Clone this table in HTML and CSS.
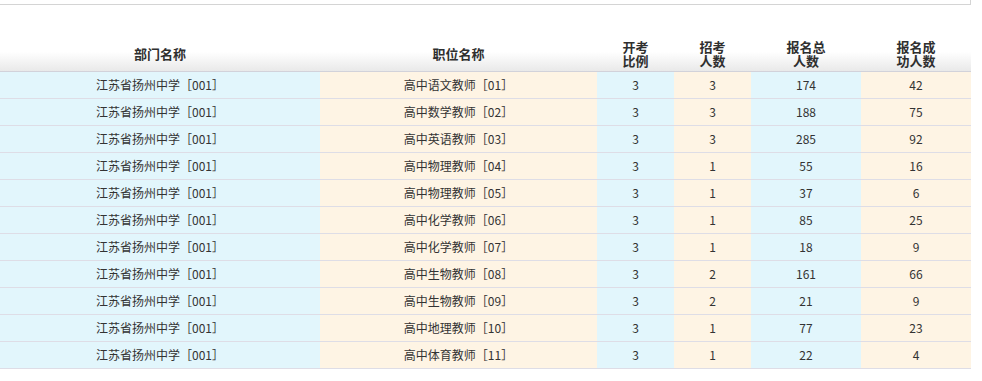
FILE: index.html
```html
<!DOCTYPE html>
<html lang="zh">
<head>
<meta charset="utf-8">
<link rel="stylesheet" href="styles.css">
</head>
<body>
<div class="topbox"></div>
<table class="grid">
  <colgroup>
    <col class="c1"><col class="c2"><col class="c3"><col class="c4"><col class="c5"><col class="c6">
  </colgroup>
  <thead>
    <tr>
      <th>部门名称</th>
      <th>职位名称</th>
      <th>开考<br>比例</th>
      <th>招考<br>人数</th>
      <th>报名总<br>人数</th>
      <th>报名成<br>功人数</th>
    </tr>
  </thead>
  <tbody>
    <tr><td class="b">江苏省扬州中学［001］</td><td class="y">高中语文教师［01］</td><td class="b">3</td><td class="y">3</td><td class="b">174</td><td class="y">42</td></tr>
    <tr><td class="b">江苏省扬州中学［001］</td><td class="y">高中数学教师［02］</td><td class="b">3</td><td class="y">3</td><td class="b">188</td><td class="y">75</td></tr>
    <tr><td class="b">江苏省扬州中学［001］</td><td class="y">高中英语教师［03］</td><td class="b">3</td><td class="y">3</td><td class="b">285</td><td class="y">92</td></tr>
    <tr><td class="b">江苏省扬州中学［001］</td><td class="y">高中物理教师［04］</td><td class="b">3</td><td class="y">1</td><td class="b">55</td><td class="y">16</td></tr>
    <tr><td class="b">江苏省扬州中学［001］</td><td class="y">高中物理教师［05］</td><td class="b">3</td><td class="y">1</td><td class="b">37</td><td class="y">6</td></tr>
    <tr><td class="b">江苏省扬州中学［001］</td><td class="y">高中化学教师［06］</td><td class="b">3</td><td class="y">1</td><td class="b">85</td><td class="y">25</td></tr>
    <tr><td class="b">江苏省扬州中学［001］</td><td class="y">高中化学教师［07］</td><td class="b">3</td><td class="y">1</td><td class="b">18</td><td class="y">9</td></tr>
    <tr><td class="b">江苏省扬州中学［001］</td><td class="y">高中生物教师［08］</td><td class="b">3</td><td class="y">2</td><td class="b">161</td><td class="y">66</td></tr>
    <tr><td class="b">江苏省扬州中学［001］</td><td class="y">高中生物教师［09］</td><td class="b">3</td><td class="y">2</td><td class="b">21</td><td class="y">9</td></tr>
    <tr><td class="b">江苏省扬州中学［001］</td><td class="y">高中地理教师［10］</td><td class="b">3</td><td class="y">1</td><td class="b">77</td><td class="y">23</td></tr>
    <tr><td class="b">江苏省扬州中学［001］</td><td class="y">高中体育教师［11］</td><td class="b">3</td><td class="y">1</td><td class="b">22</td><td class="y">4</td></tr>
  </tbody>
</table>
</body>
</html>
```
FILE: styles.css
```css
html, body {
  margin: 0;
  padding: 0;
  background: #fff;
}
body {
  font-family: "Noto Sans CJK SC", "DejaVu Sans", sans-serif;
  font-size: 12px;
  color: #333;
}
.topbox {
  width: 970px;
  height: 4px;
  border-right: 1px solid #d4d4d4;
  border-bottom: 1px solid #d4d4d4;
  box-sizing: content-box;
}
.grid {
  margin-top: 31px;
  width: 971px;
  border-collapse: collapse;
  table-layout: fixed;
}
.c1 { width: 320px; }
.c2 { width: 277px; }
.c3 { width: 77px; }
.c4 { width: 77px; }
.c5 { width: 110px; }
.c6 { width: 110px; }
.grid th {
  height: 35px;
  padding: 0;
  font-weight: bold;
  font-size: 13px;
  line-height: 14px;
  color: #2f2f2f;
  text-align: center;
  vertical-align: middle;
  background: linear-gradient(to bottom, #ffffff 45%, #e9e9e9 100%);
  border-bottom: 1px solid #d2d2da;
}
.grid td {
  height: 26px;
  padding: 0;
  text-align: center;
  vertical-align: middle;
  line-height: 14px;
  border-bottom: 1px solid #dedde6;
  color: #333;
}
.grid td.b { background: #e2f6fc; }
.grid td.y { background: #fef4e4; }
```
